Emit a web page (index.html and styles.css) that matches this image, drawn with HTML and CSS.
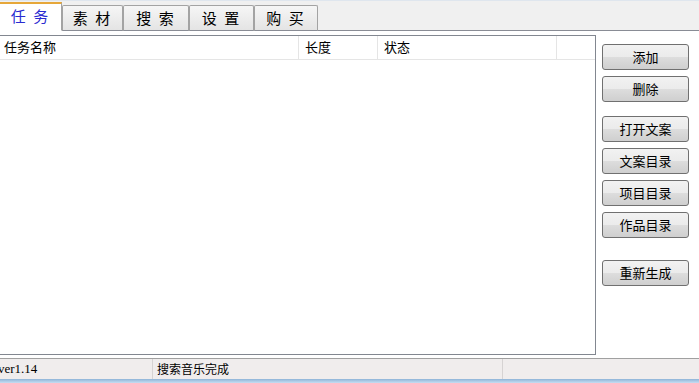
FILE: index.html
```html
<!DOCTYPE html>
<html lang="zh-CN">
<head>
    <meta charset="UTF-8">
    <title>任务</title>
    <link rel="stylesheet" href="styles.css">
</head>
<body>

<div class="tabs">
    <div class="tab active">任 务</div>
    <div class="tab tab-2">素 材</div>
    <div class="tab tab-3">搜 索</div>
    <div class="tab tab-4">设 置</div>
    <div class="tab tab-5">购 买</div>
</div>

<div class="main">
    <div class="list">
        <div class="list-head">
            <div class="col col-name">任务名称</div>
            <div class="col col-len">长度</div>
            <div class="col col-state">状态</div>
            <div class="col col-rest"></div>
        </div>
    </div>
    <div class="side">
        <div class="group">
            <button class="btn">添加</button>
            <button class="btn">删除</button>
        </div>
        <div class="group">
            <button class="btn">打开文案</button>
            <button class="btn">文案目录</button>
            <button class="btn">项目目录</button>
            <button class="btn">作品目录</button>
        </div>
        <div class="group">
            <button class="btn">重新生成</button>
        </div>
    </div>
</div>

<div class="status">
    <div class="cell cell-ver">ver1.14</div>
    <div class="cell cell-msg">搜索音乐完成</div>
    <div class="cell cell-rest"></div>
</div>
<div class="taskbar"></div>

</body>
</html>
```

FILE: styles.css
```css
html, body {
    margin: 0;
    padding: 0;
}
body {
    width: 699px;
    height: 383px;
    overflow: hidden;
    background: #ffffff;
    color: #000;
    font-family: "Noto Sans CJK SC", "DejaVu Sans", sans-serif;
    font-size: 13px;
}
.tabs {
    display: flex;
    align-items: flex-end;
    height: 31px;
    background: #f0f0f0;
    border-top: 1px solid #dfe6ee;
    border-bottom: 1px solid #898c95;
    box-sizing: border-box;
}
.tab {
    height: 24px;
    margin-bottom: -1px;
    border: 1px solid #a3a3a3;
    border-bottom: 1px solid #898c95;
    border-radius: 2px 2px 0 0;
    background: linear-gradient(#f6f6f6, #e4e4e4);
    font-size: 15px;
    line-height: 24px;
    text-align: center;
    letter-spacing: 2px;
}
.tab-2 {
    width: 59px;
}
.tab-3 {
    width: 64px;
}
.tab-4 {
    width: 63px;
}
.tab-5 {
    width: 62px;
}
.tab.active {
    width: 61px;
    height: 26px;
    background: #fff;
    color: #2a2ad0;
    border: none;
    border-top: 2px solid #e6a73a;
    border-right: 1px solid #a3a3a3;
    border-bottom: 1px solid #fff;
    border-radius: 0;
}
.main {
    display: flex;
    align-items: flex-start;
    height: 327px;
    padding-top: 4px;
    box-sizing: border-box;
}
.list {
    width: 597px;
    height: 320px;
    margin-left: -1px;
    border: 1px solid #828790;
    box-sizing: border-box;
    background: #fff;
}
.list-head {
    display: flex;
    height: 23px;
    border-bottom: 1px solid #e5e5e5;
    line-height: 22px;
}
.col {
    border-right: 1px solid #e5e5e5;
    padding-left: 4px;
    box-sizing: border-box;
}
.col-name {
    width: 299px;
}
.col-len {
    width: 79px;
    padding-left: 6px;
}
.col-state {
    width: 179px;
    padding-left: 6px;
}
.col-rest {
    flex: 1;
    border-right: none;
}
.side {
    display: flex;
    flex-direction: column;
    gap: 14px;
    padding-top: 9px;
    margin-left: 6px;
}
.side .group:last-child {
    margin-top: 8px;
}
.group {
    display: flex;
    flex-direction: column;
    gap: 6px;
}
.btn {
    display: block;
    width: 87px;
    height: 26px;
    margin: 0;
    padding: 0;
    border: 1px solid #707070;
    border-radius: 3px;
    background: linear-gradient(#f2f2f2 0%, #ebebeb 50%, #dddddd 51%, #cfcfcf 100%);
    font-family: "Noto Sans CJK SC", sans-serif;
    font-size: 13px;
    line-height: 24px;
    color: #000;
}
.status {
    display: flex;
    height: 21px;
    background: #f0eded;
    border-top: 1px solid #a0a0a0;
    box-sizing: border-box;
    line-height: 20px;
}
.cell {
    border-right: 1px solid #d6d3d3;
    box-sizing: border-box;
}
.cell-ver {
    width: 155px;
    margin-left: -2px;
    font-family: "Liberation Serif", serif;
    font-size: 13px;
}
.cell-msg {
    width: 350px;
    padding-left: 4px;
    font-size: 12px;
}
.cell-rest {
    flex: 1;
    border-right: none;
}
.taskbar {
    height: 4px;
    background: linear-gradient(#8fb4d8, #c6ddf2);
}
```
